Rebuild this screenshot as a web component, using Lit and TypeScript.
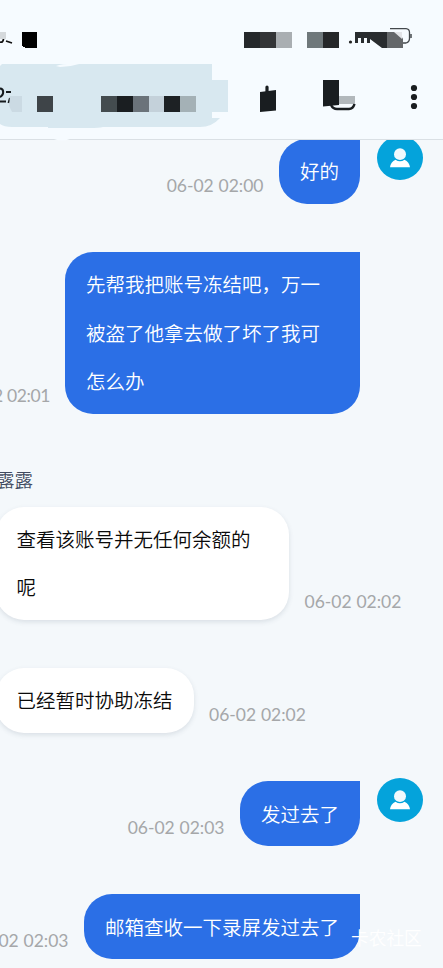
import { LitElement, html, css, nothing } from "lit";
import { customElement, property } from "lit/decorators.js";

@customElement("user-avatar")
class UserAvatar extends LitElement {
  static styles = css`
    :host { display: block; width: 46px; height: 44px; }
    svg { display: block; }
  `;
  render() {
    return html`<svg width="46" height="44" viewBox="0 0 46 44">
      <ellipse cx="23" cy="22" rx="23" ry="22" fill="#04a3db" />
      <path d="M13 31.3C13.2 28 15.5 25 18.5 23.7Q23 27 27.5 23.7C30.500 25 32.800 28 33 31.300Z" fill="#fff" />
      <ellipse cx="23" cy="18.200" rx="6" ry="5.900" fill="#f1f9fd" />
    </svg>`;
  }
}

@customElement("chat-header")
class ChatHeader extends LitElement {
  static styles = css`
    :host { display: block; height: 139px; background: #f6fbff; border-bottom: 1px solid #dae0e5; }
    svg { display: block; overflow: visible; }
  `;
  render() {
    return html`<svg width="443" height="139" viewBox="0 0 443 139">
      <g shape-rendering="crispEdges">
        <path d="M0 32h6v7H0z" fill="#d5d9dc" />
        <path d="M22 32h15v16H26l-4-2z" fill="#000" />
        <path d="M244 32h16v16h-16z" fill="#25282b" />
        <path d="M260 32h16v16h-16z" fill="#333537" />
        <path d="M276 32h16v16h-16z" fill="#a9aeb2" />
        <path d="M307 32h16v16h-16z" fill="#6f787b" />
        <path d="M323 32h16v16h-16z" fill="#252729" />
      </g>
      <path d="M0 42Q3 43 3.500 39M6 41l6 2" fill="none" stroke="#111" stroke-width="1.800" />
      <circle cx="350.500" cy="42" r="1.600" fill="#222" />
      <path d="M355 32h32v16h-5l-12-9v4h-3v-5h-3v5h-3v-5h-3v5h-3z" fill="#292c2f" />
      <path d="M387 32h12l4 7v9h-16z" fill="#64676a" />
      <path d="M394 32h8v7z" fill="#e2e4e8" />
      <path d="M390 28.700h16Q409.500 29 409.500 32.500v6Q409.500 42 406 43h-3" fill="none" stroke="#43484c" stroke-width="1.300" />
      <path d="M411 34v4" stroke="#43484c" stroke-width="1.500" />

      <path d="M2 64H212V80H228V112H212V118H220Q212 127 200 127H103Q99 128 90 128H48V127H12Q4 127 0 124V66Z" fill="#d8e8f0" />
      <path d="M56 66Q64 63 79 64Q70 67 60 67Z" fill="#f6fbff" />
      <path d="M54 139Q62 136.500 70 139Q62 142 54 139Z" fill="#f6fbff" />
      <path d="M0 88.500Q3.200 88.500 3.200 92Q3.200 95.500 0 97M6 92h5M0 101.500h6M10 98l-1.500 5" fill="none" stroke="#161b1e" stroke-width="2" />
      <path d="M10 96h12v16H12l-3-6z" fill="#cbdae3" />
      <g shape-rendering="crispEdges">
        <path d="M37 96h16v16H37z" fill="#3e4448" />
        <path d="M101 96h16v16h-16z" fill="#444c4f" />
        <path d="M117 96h16v16h-16z" fill="#1a1e21" />
        <path d="M133 96h16v16h-16z" fill="#6b737a" />
        <path d="M149 96h15v16h-15z" fill="#c4d1da" />
        <path d="M164 96h16v16h-16z" fill="#1d2124" />
        <path d="M180 96h16v16h-16z" fill="#a4b1b6" />
      </g>

      <path d="M267 87v6" stroke="#191d20" stroke-width="3.200" stroke-linecap="round" />
      <path d="M260 92l16-2v20.500l-16 1.500z" fill="#191d20" />
      <path d="M339 96h16v8h-16z" fill="#b2b8bc" />
      <path d="M323 80h16v25l-16 1.500z" fill="#191d20" />
      <path d="M331 105Q333 109 337 109H349Q353 109 354.500 104" fill="none" stroke="#191d20" stroke-width="2.500" />
      <g fill="#191d20">
        <circle cx="414" cy="88" r="3.100" /><circle cx="414" cy="97" r="3.100" /><circle cx="414" cy="106" r="3.100" />
      </g>
    </svg>`;
  }
}

@customElement("chat-message")
class ChatMessage extends LitElement {
  @property({ type: Array }) lines: string[] = [];
  @property() time = "";
  @property({ type: Boolean, reflect: true }) own = false;
  @property({ type: Boolean, reflect: true }) wide = false;
  @property({ type: Boolean }) avatar = false;

  static styles = css`
    :host { display: flex; align-items: flex-end; gap: 15.5px; margin-left: -4.500px; }
    :host([own]) { flex-direction: row-reverse; margin-left: 0; padding-right: 83px; position: relative; }
    .bubble {
      box-sizing: border-box; flex: none; padding: 8.300px 21px; border-radius: 28px;
      background: #fff; color: #0a0a0a; box-shadow: 0 2px 5px rgba(60, 80, 100, .14);
      font-size: 19.500px; line-height: 48.300px; font-weight: 350; white-space: nowrap;
    }
    :host([own]) .bubble { background: #2b6fe6; color: #fff; border-top-right-radius: 0; box-shadow: none; }
    :host([wide]) .bubble { width: 293.500px; }
    :host([own][wide]) .bubble { width: 295px; }
    .line { display: block; }
    .time {
      flex: none; margin-bottom: 7px; font: 400 17.500px/22px Lato, sans-serif; word-spacing: .3px;
      color: #a5a7a9; white-space: nowrap;
    }
    :host([own][wide]) .time { letter-spacing: -.4px; margin-right: -.5px; }
    user-avatar { position: absolute; right: 20px; top: -3px; }
  `;
  render() {
    return html`
      <div class="bubble">${this.lines.map((l) => html`<span class="line">${l}</span>`)}</div>
      <span class="time">${this.time}</span>
      ${this.avatar ? html`<user-avatar></user-avatar>` : nothing}
    `;
  }
}

@customElement("app-root")
class AppRoot extends LitElement {
  static styles = css`
    :host {
      display: flex; flex-direction: column; position: relative; height: 968px; width: 443px; overflow: hidden;
      background: #f4f8fb; font-family: "Noto Sans CJK SC", sans-serif;
    }
    chat-header { flex: none; }
    .thread { flex: 1; min-height: 0; overflow: hidden; }
    .list { display: flex; flex-direction: column; gap: 48.200px; margin-top: -1px; }
    .name { margin: 0 0 13px -4px; font-size: 18.500px; line-height: 30px; font-weight: 350; color: #414b60; }
    .group { padding-top: 2px; }
    .watermark { position: absolute; left: 351px; top: 924px; font-size: 17.700px; line-height: 27px; font-weight: 350; color: #fff; }
  `;
  render() {
    return html`
      <chat-header></chat-header>
      <main class="thread">
        <div class="list">
          <chat-message own avatar time="06-02 02:00" .lines=${["好的"]}></chat-message>
          <chat-message own wide time="06-02 02:01" .lines=${["先帮我把账号冻结吧，万一", "被盗了他拿去做了坏了我可", "怎么办"]}></chat-message>
          <section class="group">
            <div class="name">露露</div>
            <chat-message wide time="06-02 02:02" .lines=${["查看该账号并无任何余额的", "呢"]}></chat-message>
          </section>
          <chat-message time="06-02 02:02" .lines=${["已经暂时协助冻结"]}></chat-message>
          <chat-message own avatar time="06-02 02:03" .lines=${["发过去了"]}></chat-message>
          <chat-message own time="06-02 02:03" .lines=${["邮箱查收一下录屏发过去了"]}></chat-message>
        </div>
      </main>
      <div class="watermark">卡农社区</div>
    `;
  }
}
